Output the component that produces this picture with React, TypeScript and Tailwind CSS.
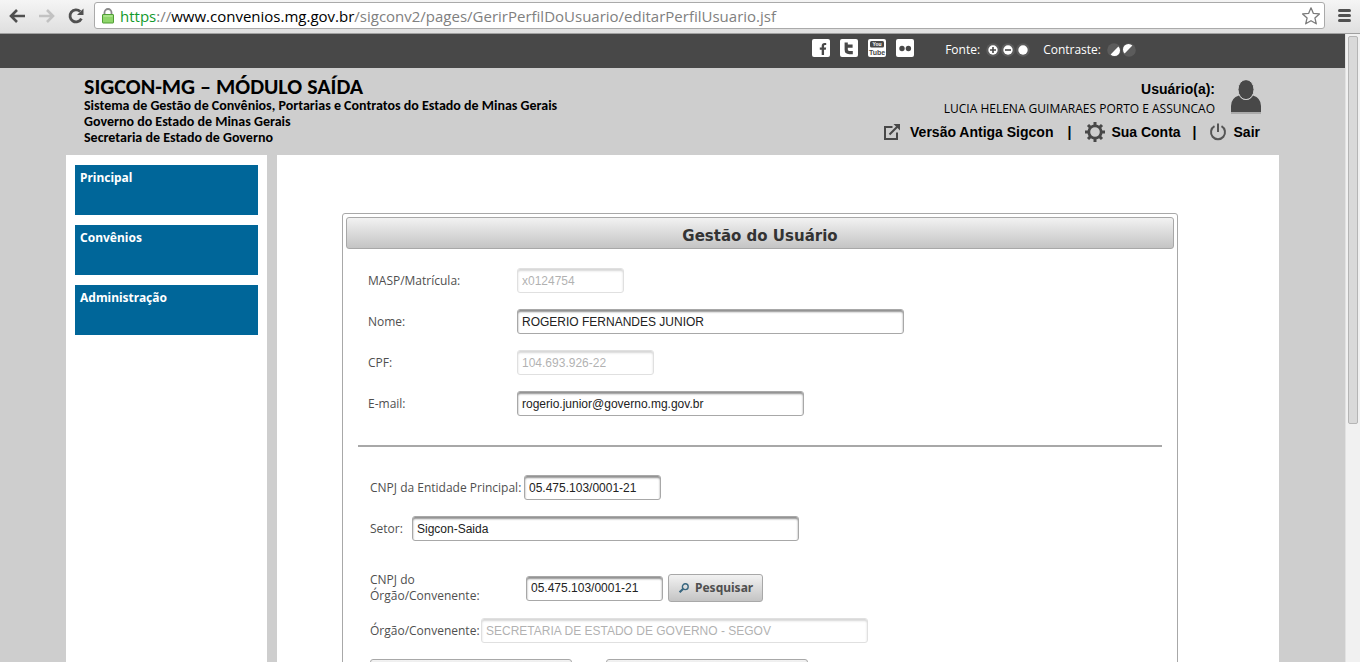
import type { ReactNode } from "react";
import { FaFacebookF } from "react-icons/fa";

const menu = ["Principal", "Convênios", "Administração"];

const perfil = [
  { id: "masp", label: "MASP/Matrícula:", value: "x0124754", width: "w-[107px]", disabled: true },
  { id: "nome", label: "Nome:", value: "ROGERIO FERNANDES JUNIOR", width: "w-[387px]" },
  { id: "cpf", label: "CPF:", value: "104.693.926-22", width: "w-[137px]", disabled: true },
  { id: "email", label: "E-mail:", value: "rogerio.junior@governo.mg.gov.br", width: "w-[287px]" },
];

const buttonStyle =
  "rounded-[3px] border border-[#a8a8a8] bg-linear-to-b from-[#f2f2f2] to-[#c4c4c4]";

type FieldProps = {
  id: string;
  label: string;
  value: string;
  width: string;
  labelWidth: string;
  disabled?: boolean;
  children?: ReactNode;
};

function Field({ id, label, value, width, labelWidth, disabled, children }: FieldProps) {
  return (
    <div className="flex items-center">
      <label htmlFor={id} className={`${labelWidth} shrink-0 text-xs leading-4 text-[#4f4f4f]`}>
        {label}
      </label>
      <input
        id={id}
        type="text"
        defaultValue={value}
        disabled={disabled}
        className={`${width} h-[25px] rounded-[3px] border border-[#a8a8a8] bg-white px-1 font-['Liberation_Sans',Arial,sans-serif] text-xs text-[#222] shadow-[inset_0_2px_2px_#8f8f8f] disabled:opacity-35`}
      />
      {children}
    </div>
  );
}

function BrowserBar() {
  return (
    <div className="flex h-[34px] shrink-0 items-center border-b border-[#a0a0a0] bg-linear-to-b from-[#f5f5f5] to-[#dfdfdf] pb-[2px]">
      <button aria-label="Voltar" className="ml-[9px] h-4 w-4">
        <svg viewBox="0 0 16 16" className="h-4 w-4" fill="none" stroke="#505050" strokeWidth="2.6">
          <path d="M16 8H2.5M8 2L2 8l6 6" />
        </svg>
      </button>
      <button aria-label="Avançar" className="ml-[14px] h-4 w-4">
        <svg viewBox="0 0 16 16" className="h-4 w-4" fill="none" stroke="#c2c2c2" strokeWidth="2.6">
          <path d="M0 8h13.5M8 2l6 6-6 6" />
        </svg>
      </button>
      <button aria-label="Recarregar" className="ml-[13px] h-4 w-4">
        <svg viewBox="0 0 16 16" className="h-4 w-4" fill="none" stroke="#505050" strokeWidth="2.8">
          <path d="M12.2 3.6A6 6 0 1 0 13.4 10.6" />
          <path d="M15.5 0.5V7H9z" fill="#505050" stroke="none" />
        </svg>
      </button>
      <div className="ml-[10px] flex h-[27px] flex-1 items-center rounded-[3px] border border-[#aaa] bg-white">
        <svg viewBox="0 0 14 16" className="ml-[6px] h-4 w-[14px]">
          <path d="M3.5 7V4.5a3.5 3.5 0 0 1 7 0V7" fill="none" stroke="#8a8a8a" strokeWidth="1.8" />
          <rect x="1.5" y="6.5" width="11" height="8.5" rx="0.5" fill="#8fd66b" stroke="#4f9e34" />
          <path d="M2.5 8h9" stroke="#c3efaa" />
        </svg>
        <span className="ml-[5px] flex-1 font-['Open_Sans','Segoe_UI',sans-serif] text-[15px] leading-5 whitespace-nowrap text-[#808080]">
          <span className="text-[#129a2c]">https</span>://
          <span className="text-black">www.convenios.mg.gov.br</span>
          /sigconv2/pages/GerirPerfilDoUsuario/editarPerfilUsuario.jsf
        </span>
        <svg viewBox="0 0 20 20" className="mr-[3px] h-5 w-5" fill="white" stroke="#7b7b7b" strokeWidth="1.3">
          <path
            d="M10 1.8l2.4 5.6 6 .5-4.5 4 1.4 5.9L10 14.7l-5.3 3.1 1.4-5.9-4.5-4 6-.5z"
            strokeLinejoin="round"
          />
        </svg>
      </div>
      <button aria-label="Menu" className="mr-[9px] ml-[13px] flex w-[13px] flex-col gap-[2px]">
        <span className="h-[3px] rounded-xs bg-[#505050]" />
        <span className="h-[3px] rounded-xs bg-[#505050]" />
        <span className="h-[3px] rounded-xs bg-[#505050]" />
      </button>
    </div>
  );
}

function SocialLinks() {
  return (
    <div className="flex gap-[10px]">
      <a href="#facebook" aria-label="Facebook" className="flex h-[18px] w-[18px] items-end justify-end rounded-xs bg-white pr-[3px] pb-[2px]">
        <FaFacebookF className="h-3 w-2 text-[#484848]" />
      </a>
      <a href="#twitter" aria-label="Twitter" className="rounded-xs bg-white">
        <svg viewBox="0 0 18 18" className="h-[18px] w-[18px]" fill="none" stroke="#484848" strokeWidth="3.2">
          <path d="M6.2 3.6v7q0 3 3 3h3.6M6 7.2h6.6" strokeLinejoin="round" />
        </svg>
      </a>
      <a href="#youtube" aria-label="YouTube" className="rounded-xs bg-white">
        <svg viewBox="0 0 18 18" className="h-[18px] w-[18px] font-['Liberation_Sans_Narrow','Liberation_Sans',sans-serif] font-bold">
          <rect x="2" y="2" width="14" height="6.5" rx="1.5" fill="#484848" />
          <text x="9" y="7" fontSize="5" textAnchor="middle" fill="white">You</text>
          <text x="9" y="15.5" fontSize="7" textAnchor="middle" fill="#484848">Tube</text>
        </svg>
      </a>
      <a href="#flickr" aria-label="Flickr" className="rounded-xs bg-white">
        <svg viewBox="0 0 18 18" className="h-[18px] w-[18px]" fill="#484848">
          <circle cx="6" cy="9.5" r="2.7" />
          <circle cx="12.4" cy="9.5" r="2.7" />
        </svg>
      </a>
    </div>
  );
}

function TopBar() {
  return (
    <div className="flex h-[34px] shrink-0 items-start justify-end bg-[#484848] pt-[5px] pr-[209px] text-xs text-white">
      <SocialLinks />
      <div className="ml-[31px] flex h-[22px] items-center">
        <span>Fonte:</span>
        <button aria-label="Aumentar fonte" className="ml-[6px]">
          <svg viewBox="0 0 14 14" className="h-[14px] w-[14px]">
            <circle cx="7" cy="7" r="6.8" fill="#5c5c5c" />
            <circle cx="7" cy="7" r="4.7" fill="white" />
            <path d="M7 4v6M4 7h6" stroke="#484848" strokeWidth="1.6" />
          </svg>
        </button>
        <button aria-label="Diminuir fonte" className="ml-px">
          <svg viewBox="0 0 14 14" className="h-[14px] w-[14px]">
            <circle cx="7" cy="7" r="6.8" fill="#5c5c5c" />
            <circle cx="7" cy="7" r="4.7" fill="white" />
            <path d="M4 7h6" stroke="#484848" strokeWidth="1.6" />
          </svg>
        </button>
        <button aria-label="Fonte normal" className="ml-px">
          <svg viewBox="0 0 14 14" className="h-[14px] w-[14px]">
            <circle cx="7" cy="7" r="6.8" fill="#5c5c5c" />
            <circle cx="7" cy="7" r="4.7" fill="white" />
          </svg>
        </button>
        <span className="ml-[13px]">Contraste:</span>
        <button aria-label="Contraste alto" className="ml-[6px]">
          <svg viewBox="0 0 14 14" className="h-[14px] w-[14px]">
            <circle cx="7" cy="7" r="6.8" fill="#5c5c5c" />
            <path d="M11.4 3.6A4.9 4.9 0 0 1 3.6 11.4z" fill="white" />
          </svg>
        </button>
        <button aria-label="Contraste normal" className="ml-px">
          <svg viewBox="0 0 14 14" className="h-[14px] w-[14px]">
            <circle cx="7" cy="7" r="6.8" fill="#5c5c5c" />
            <path d="M2.6 10.4A4.9 4.9 0 0 1 10.4 2.6z" fill="white" />
          </svg>
        </button>
      </div>
    </div>
  );
}

function Header() {
  return (
    <header className="flex h-[87px] shrink-0 justify-between text-black">
      <div className="pt-2 pl-[18px] font-['Carlito','Lato',sans-serif] text-sm leading-4 font-bold">
        <h1 className="text-[22px] leading-[22px]">SIGCON-MG – MÓDULO SAÍDA</h1>
        <p>Sistema de Gestão de Convênios, Portarias e Contratos do Estado de Minas Gerais</p>
        <p>Governo do Estado de Minas Gerais</p>
        <p>Secretaria de Estado de Governo</p>
      </div>
      <div className="flex flex-col items-end pt-3 pr-[18px] font-['Liberation_Sans',Arial,sans-serif] text-sm font-bold">
        <div className="flex gap-4">
          <div className="text-right">
            <p className="leading-[19px]">Usuário(a):</p>
            <p className="font-['Open_Sans',Tahoma,sans-serif] text-xs leading-5 font-normal">
              LUCIA HELENA GUIMARAES PORTO E ASSUNCAO
            </p>
          </div>
          <svg viewBox="0 0 30 34" className="h-[34px] w-[30px]">
            <path d="M0 32h30v2H0z" fill="#aaa" />
            <path d="M0 32v-6q0-8 8-10.5Q11 20 15 20t7-4.5Q30 18 30 26v6z" fill="#484848" />
            <ellipse cx="15" cy="9.6" rx="8" ry="10" fill="#484848" stroke="#cecece" strokeWidth="1" />
          </svg>
        </div>
        <nav className="flex h-[26px] items-center pr-px">
          <a href="#antiga" className="flex items-center gap-[10px]">
            <svg viewBox="0 0 16 16" className="h-4 w-4" fill="none" stroke="#484848" strokeWidth="2">
              <path d="M8.5 3H1v12h12V8.5M5.5 10.5L14 2" />
              <path d="M9.5 0H16v6.5z" fill="#484848" stroke="none" />
            </svg>
            Versão Antiga Sigcon
          </a>
          <span className="mx-[14px]">|</span>
          <a href="#conta" className="flex items-center gap-[6px]">
            <svg viewBox="0 0 20 20" className="h-5 w-5" fill="none" stroke="#484848">
              <circle cx="10" cy="10" r="6.2" strokeWidth="2.8" />
              <path
                d="M10 0v3.4M10 16.6v3.4M0 10h3.4M16.6 10h3.4M3 3l2.4 2.4M14.6 14.6L17 17M3 17l2.4-2.4M14.6 5.4L17 3"
                strokeWidth="3"
              />
            </svg>
            Sua Conta
          </a>
          <span className="mx-3">|</span>
          <a href="#sair" className="flex items-center gap-[7px]">
            <svg viewBox="0 0 18 18" className="h-[18px] w-[18px]" fill="none" stroke="#555" strokeWidth="2">
              <path d="M5.5 3.2a7 7 0 1 0 7 0M9 0.5v8.5" />
            </svg>
            Sair
          </a>
        </nav>
      </div>
    </header>
  );
}

function UserForm() {
  return (
    <form className="rounded-[3px] border border-[#a8a8a8] p-[3px]">
      <h2 className="h-8 rounded-[3px] border border-[#a8a8a8] bg-linear-to-b from-[#f2f2f2] to-[#c4c4c4] text-center font-['DejaVu_Sans',Verdana,sans-serif] text-[15px] leading-9 font-bold text-[#333]">
        Gestão do Usuário
      </h2>
      <div className="flex flex-col gap-4 px-[22px] pt-[19px]">
        {perfil.map((f) => (
          <Field key={f.id} labelWidth="w-[149px]" {...f} />
        ))}
      </div>
      <hr className="mx-3 mt-[29px] border-t-2 border-[#a8a8a8]" />
      <div className="px-6 pt-7">
        <div className="flex flex-col gap-4">
          <Field id="cnpjPrincipal" label="CNPJ da Entidade Principal:" value="05.475.103/0001-21" width="w-[137px]" labelWidth="w-[154px]" />
          <Field id="setor" label="Setor:" value="Sigcon-Saida" width="w-[387px]" labelWidth="w-[42px]" />
        </div>
        <div className="mt-[31px] mb-[14px]">
          <Field id="cnpjOrgao" label="CNPJ do Órgão/Convenente:" value="05.475.103/0001-21" width="w-[137px]" labelWidth="w-[156px] pr-8">
            <button
              type="button"
              className={`${buttonStyle} ml-[5px] flex h-7 items-center gap-[5px] px-[9px] font-['Noto_Sans',Tahoma,sans-serif] text-xs font-bold text-[#4f4f4f]`}
            >
              <svg viewBox="0 0 12 12" className="h-3 w-3" fill="none" stroke="#38667f">
                <circle cx="7.3" cy="4.7" r="2.9" strokeWidth="1.4" />
                <path d="M5 7L1.6 10.2" strokeWidth="2.2" />
              </svg>
              Pesquisar
            </button>
          </Field>
        </div>
        <Field id="orgao" label="Órgão/Convenente:" value="SECRETARIA DE ESTADO DE GOVERNO - SEGOV" width="w-[387px]" labelWidth="w-[111px]" disabled />
        <div className="flex gap-[34px] py-4">
          <button type="button" aria-label="Adicionar" className={`${buttonStyle} h-7 w-[202px]`} />
          <button type="button" aria-label="Remover" className={`${buttonStyle} h-7 w-[202px]`} />
        </div>
      </div>
    </form>
  );
}

export default function App() {
  return (
    <div className="flex h-screen flex-col overflow-hidden font-['Open_Sans',Tahoma,sans-serif]">
      <BrowserBar />
      <div className="flex min-h-0 flex-1">
        <div className="flex min-w-0 flex-1 flex-col overflow-hidden bg-[#cecece]">
          <TopBar />
          <div className="flex min-h-0 flex-1 flex-col px-[66px]">
            <Header />
            <div className="flex min-h-0 flex-1 gap-[10px]">
              <aside className="flex w-[201px] shrink-0 flex-col gap-[10px] bg-white p-[9px] pt-[10px]">
                {menu.map((item) => (
                  <a
                    key={item}
                    href={`#${item}`}
                    className="h-[50px] bg-[#006699] px-[5px] pt-1 font-['Noto_Sans',Tahoma,sans-serif] text-xs leading-[18px] font-bold text-white"
                  >
                    {item}
                  </a>
                ))}
              </aside>
              <main className="flex-1 bg-white pt-[58px] pr-[101px] pl-[65px]">
                <UserForm />
              </main>
            </div>
          </div>
        </div>
        {/* Scrollbar */}
        <div className="w-[15px] shrink-0 border-l border-[#e2e2e2] bg-[#f1f1f1] px-[2px] pt-[2px]">
          <div className="h-[62%] rounded-xs border border-[#b5b5b5] bg-[#d9d9d9]" />
        </div>
      </div>
    </div>
  );
}
